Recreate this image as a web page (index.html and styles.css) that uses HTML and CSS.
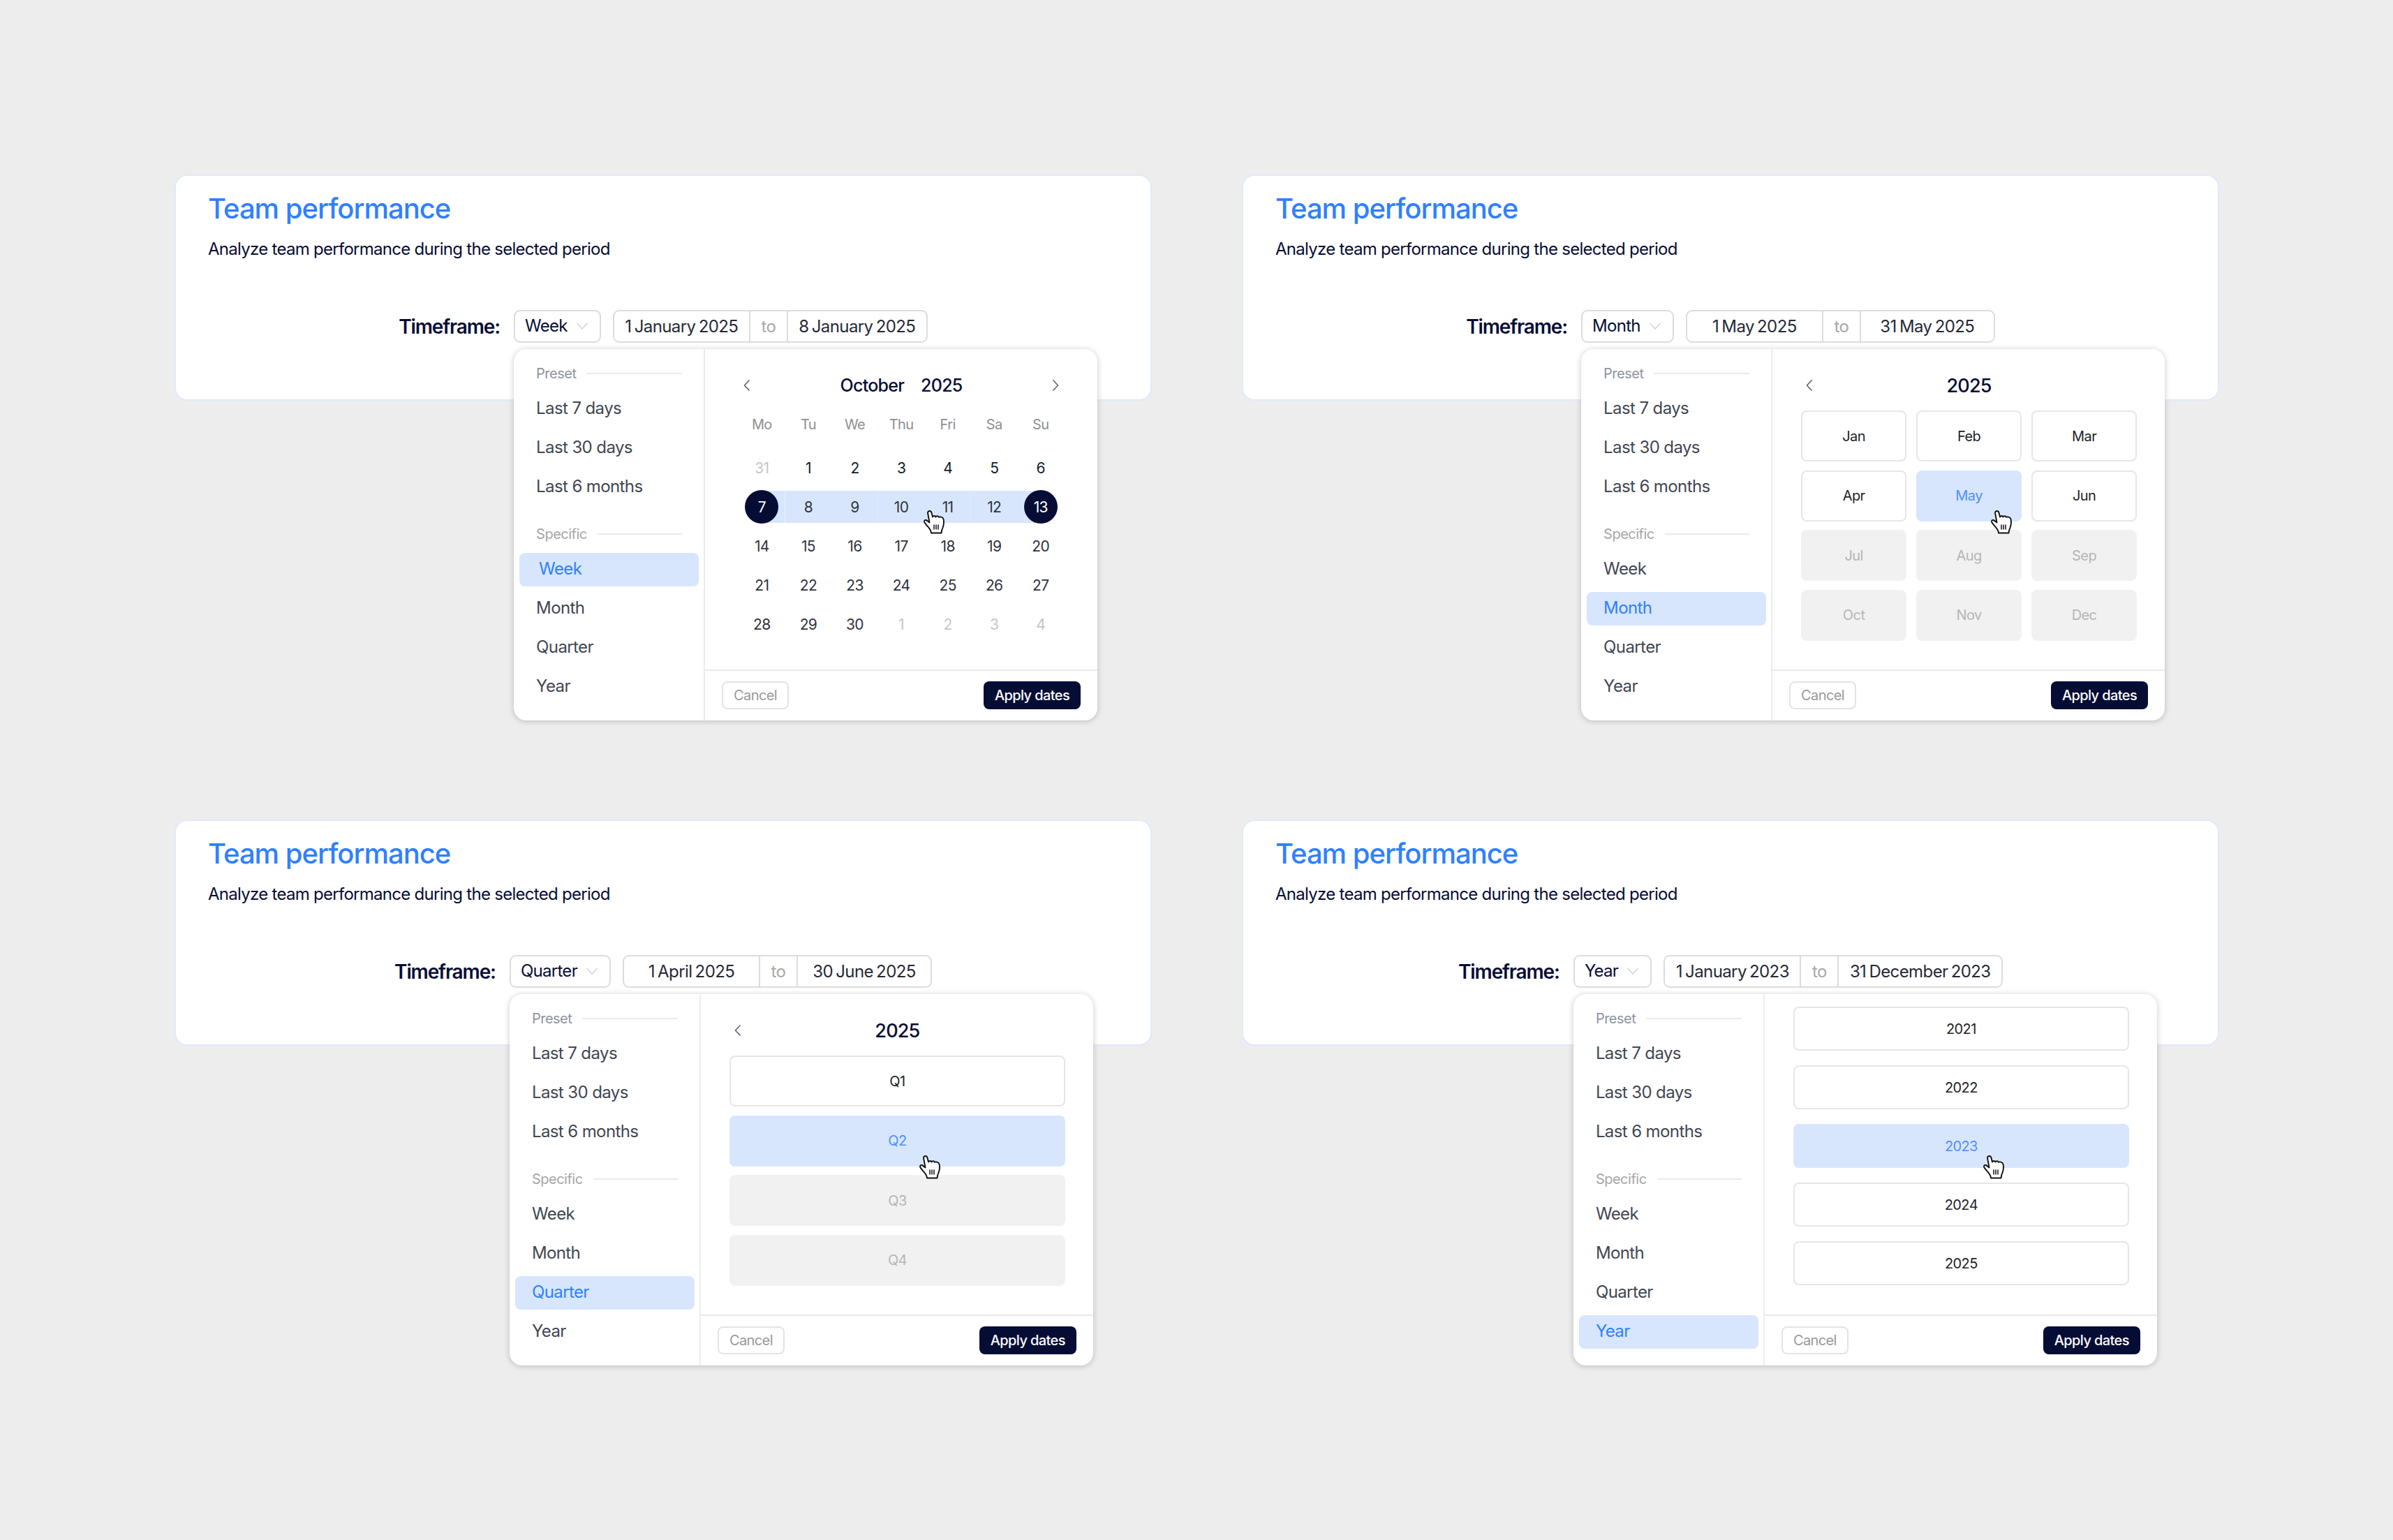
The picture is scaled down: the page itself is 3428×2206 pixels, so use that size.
FILE: index.html
```html
<!DOCTYPE html>
<html lang="en">
<head>
<meta charset="utf-8">
<title>Team performance</title>
<link rel="stylesheet" href="styles.css">
</head>
<body>
<svg class="defs" width="0" height="0" aria-hidden="true">
  <symbol id="hand" viewBox="0 0 30 33">
    <path d="M6 3C6 1 7.5.5 8.7.5c1.8 0 2.6 1.5 2.9 3L13 9c1-2 3.500-2 4.300 0 .7-1.500 3.700-1.800 4.700.3 1.500-.8 5-.3 6 1.700 1.500 2 1 8 .5 10-.5 3-2 5-2.500 8l-.5 3H11l-.5-2.500C9 25 3 20 1.500 17c-1-2 0-4 2-3.500 1.500.5 3.500 2.500 5 3.500L6 3z" fill="#fff" stroke="#111" stroke-width="1.9" stroke-linejoin="round"/>
    <path d="M15 20v7M18 20v7M21 20v7" fill="none" stroke="#111" stroke-width="1.500"/>
  </symbol>
  <symbol id="left" viewBox="0 0 12 20"><path d="M9.500 2.500 2.500 10l7 7.500" fill="none" stroke="#5d6470" stroke-width="1.600"/></symbol>
  <symbol id="right" viewBox="0 0 12 20"><path d="M2.500 2.500 9.500 10l-7 7.500" fill="none" stroke="#5d6470" stroke-width="1.600"/></symbol>
  <symbol id="down" viewBox="0 0 18 12"><path d="M1.500 2 9 10l7.500-8" fill="none" stroke="#d3d5d9" stroke-width="1.700"/></symbol>
</svg>
<main class="board">

<section class="card">
  <h2 class="title">Team performance</h2>
  <p class="subtitle">Analyze team performance during the selected period</p>
  <div class="timeframe">
    <span class="tf-label">Timeframe:</span>
    <div class="controls">
      <button class="select">Week<svg class="chev"><use href="#down"/></svg></button>
      <div class="dates"><span class="date">1 January 2025</span><span class="to">to</span><span class="date">8 January 2025</span></div>
      <div class="popup">
        <aside class="side">
          <div class="side-label">Preset</div>
          <div class="side-item">Last 7 days</div>
          <div class="side-item">Last 30 days</div>
          <div class="side-item">Last 6 months</div>
          <div class="side-label specific">Specific</div>
          <div class="side-item active indented">Week</div>
          <div class="side-item">Month</div>
          <div class="side-item">Quarter</div>
          <div class="side-item">Year</div>
        </aside>
        <div class="main">
          <div class="panel cal-panel">
            <div class="head">
              <svg class="arrow"><use href="#left"/></svg>
              <div class="head-title cal-title"><span>October</span><span>2025</span></div>
              <svg class="arrow"><use href="#right"/></svg>
            </div>
            <div class="weekdays"><span>Mo</span><span>Tu</span><span>We</span><span>Thu</span><span>Fri</span><span>Sa</span><span>Su</span></div>
            <div class="days">
              <span class="day muted">31</span><span class="day dk">1</span><span class="day dk">2</span><span class="day dk">3</span><span class="day dk">4</span><span class="day dk">5</span><span class="day dk">6</span>
              <span class="day start"><b>7</b></span><span class="day range">8</span><span class="day range">9</span><span class="day range">10</span><span class="day range">11</span><span class="day range">12</span><span class="day end"><b>13</b></span>
              <span class="day">14</span><span class="day">15</span><span class="day">16</span><span class="day">17</span><span class="day">18</span><span class="day">19</span><span class="day">20</span>
              <span class="day">21</span><span class="day">22</span><span class="day">23</span><span class="day">24</span><span class="day">25</span><span class="day">26</span><span class="day">27</span>
              <span class="day">28</span><span class="day">29</span><span class="day">30</span><span class="day muted">1</span><span class="day muted">2</span><span class="day muted">3</span><span class="day muted">4</span>
            </div>
          </div>
          <div class="foot"><button class="cancel">Cancel</button><button class="apply">Apply dates</button></div>
        </div>
        <svg class="cursor"><use href="#hand"/></svg>
      </div>
    </div>
  </div>
</section>

<section class="card">
  <h2 class="title">Team performance</h2>
  <p class="subtitle">Analyze team performance during the selected period</p>
  <div class="timeframe">
    <span class="tf-label">Timeframe:</span>
    <div class="controls">
      <button class="select">Month<svg class="chev"><use href="#down"/></svg></button>
      <div class="dates"><span class="date">1 May 2025</span><span class="to">to</span><span class="date">31 May 2025</span></div>
      <div class="popup">
        <aside class="side">
          <div class="side-label">Preset</div>
          <div class="side-item">Last 7 days</div>
          <div class="side-item">Last 30 days</div>
          <div class="side-item">Last 6 months</div>
          <div class="side-label specific">Specific</div>
          <div class="side-item">Week</div>
          <div class="side-item active">Month</div>
          <div class="side-item">Quarter</div>
          <div class="side-item">Year</div>
        </aside>
        <div class="main">
          <div class="panel">
            <div class="head">
              <svg class="arrow"><use href="#left"/></svg>
              <div class="head-title">2025</div>
              <span class="arrow"></span>
            </div>
            <div class="tiles months">
              <span class="tile">Jan</span><span class="tile">Feb</span><span class="tile">Mar</span>
              <span class="tile">Apr</span><span class="tile on">May</span><span class="tile">Jun</span>
              <span class="tile off">Jul</span><span class="tile off">Aug</span><span class="tile off">Sep</span>
              <span class="tile off">Oct</span><span class="tile off">Nov</span><span class="tile off">Dec</span>
            </div>
          </div>
          <div class="foot"><button class="cancel">Cancel</button><button class="apply">Apply dates</button></div>
        </div>
        <svg class="cursor"><use href="#hand"/></svg>
      </div>
    </div>
  </div>
</section>

<section class="card">
  <h2 class="title">Team performance</h2>
  <p class="subtitle">Analyze team performance during the selected period</p>
  <div class="timeframe">
    <span class="tf-label">Timeframe:</span>
    <div class="controls">
      <button class="select">Quarter<svg class="chev"><use href="#down"/></svg></button>
      <div class="dates"><span class="date">1 April 2025</span><span class="to">to</span><span class="date">30 June 2025</span></div>
      <div class="popup">
        <aside class="side">
          <div class="side-label">Preset</div>
          <div class="side-item">Last 7 days</div>
          <div class="side-item">Last 30 days</div>
          <div class="side-item">Last 6 months</div>
          <div class="side-label specific">Specific</div>
          <div class="side-item">Week</div>
          <div class="side-item">Month</div>
          <div class="side-item active">Quarter</div>
          <div class="side-item">Year</div>
        </aside>
        <div class="main">
          <div class="panel">
            <div class="head">
              <svg class="arrow"><use href="#left"/></svg>
              <div class="head-title">2025</div>
              <span class="arrow"></span>
            </div>
            <div class="tiles quarters">
              <span class="tile">Q1</span>
              <span class="tile on">Q2</span>
              <span class="tile off">Q3</span>
              <span class="tile off">Q4</span>
            </div>
          </div>
          <div class="foot"><button class="cancel">Cancel</button><button class="apply">Apply dates</button></div>
        </div>
        <svg class="cursor"><use href="#hand"/></svg>
      </div>
    </div>
  </div>
</section>

<section class="card">
  <h2 class="title">Team performance</h2>
  <p class="subtitle">Analyze team performance during the selected period</p>
  <div class="timeframe">
    <span class="tf-label">Timeframe:</span>
    <div class="controls">
      <button class="select">Year<svg class="chev"><use href="#down"/></svg></button>
      <div class="dates"><span class="date">1 January 2023</span><span class="to">to</span><span class="date">31 December 2023</span></div>
      <div class="popup">
        <aside class="side">
          <div class="side-label">Preset</div>
          <div class="side-item">Last 7 days</div>
          <div class="side-item">Last 30 days</div>
          <div class="side-item">Last 6 months</div>
          <div class="side-label specific">Specific</div>
          <div class="side-item">Week</div>
          <div class="side-item">Month</div>
          <div class="side-item">Quarter</div>
          <div class="side-item active">Year</div>
        </aside>
        <div class="main">
          <div class="panel">
            <div class="tiles years">
              <span class="tile">2021</span>
              <span class="tile">2022</span>
              <span class="tile on">2023</span>
              <span class="tile">2024</span>
              <span class="tile">2025</span>
            </div>
          </div>
          <div class="foot"><button class="cancel">Cancel</button><button class="apply">Apply dates</button></div>
        </div>
        <svg class="cursor"><use href="#hand"/></svg>
      </div>
    </div>
  </div>
</section>

</main>
</body>
</html>
```

FILE: styles.css
```css
* { box-sizing: border-box; }
html, body { margin: 0; background: #ededed; }
body { min-height: 2206px; font-family: Inter, "Liberation Sans", sans-serif; color: #060d35; }
.defs { position: absolute; }

.board {
  display: grid;
  grid-template-columns: 1400px 1400px;
  grid-auto-rows: 324px;
  column-gap: 129px;
  row-gap: 600px;
  padding: 250px 0 0 250px;
}
.card {
  background: #fff;
  border: 2px solid #e0eafb;
  border-radius: 18px;
  padding: 24px 46px 0;
}
.title {
  margin: 0;
  font-size: 40px;
  line-height: 46px;
  font-weight: 500;
  letter-spacing: -0.025em;
  color: #2f80ff;
}
.subtitle {
  margin: 20px 0 0;
  font-size: 24px;
  line-height: 30px;
  letter-spacing: -0.03em;
  color: #060d35;
}
.timeframe {
  display: flex;
  justify-content: center;
  align-items: center;
  gap: 20px;
  margin-top: 72px;
}
.tf-label { font-size: 28px; font-weight: 600; letter-spacing: -0.04em; }
.controls { position: relative; display: flex; gap: 17px; }

.select {
  display: flex;
  align-items: center;
  gap: 12px;
  height: 47px;
  padding: 0 16px 2px 14px;
  background: #fff;
  border: 2px solid #dcdcdc;
  border-radius: 9px;
  font: 400 24px Inter, sans-serif;
  letter-spacing: -0.03em;
  color: #060d35;
}
.chev { width: 18px; height: 12px; }
.dates {
  display: flex;
  height: 47px;
  border: 2px solid #dcdcdc;
  border-radius: 9px;
  font-size: 24px;
  letter-spacing: -0.025em;
  word-spacing: -0.08em;
  color: #262a36;
}
.date { display: flex; align-items: center; justify-content: center; min-width: 190px; padding: 0 15.5px; }
.date:first-child { min-width: 193px; }
.to {
  display: flex;
  align-items: center;
  justify-content: center;
  width: 56px;
  border-left: 2px solid #dcdcdc;
  border-right: 2px solid #dcdcdc;
  color: #a8a8a8;
}

.popup {
  position: absolute;
  top: 56px;
  left: 0;
  display: flex;
  width: 836px;
  height: 532px;
  background: #fff;
  border-radius: 18px;
  box-shadow: 0 1px 8px rgba(0, 0, 0, 0.22);
  z-index: 2;
}
.cursor { position: absolute; left: 587px; top: 231px; width: 30px; height: 34px; }

.side {
  flex: none;
  width: 274px;
  padding: 23px 7px 0 8px;
  border-right: 2px solid #ececec;
}
.side-label {
  display: flex;
  align-items: center;
  gap: 15px;
  height: 24px;
  margin: 0 24px 15px;
  font-size: 20px;
  letter-spacing: -0.025em;
  color: #8d949e;
}
.side-label::after { content: ""; flex: 1; height: 2px; background: #e9e9e9; }
.side-label.specific { margin-top: 31px; color: #a6a6a6; }
.side-item {
  display: flex;
  align-items: center;
  height: 48px;
  margin-bottom: 8px;
  padding: 0 0 3px 24px;
  border-radius: 8px;
  font-size: 24px;
  letter-spacing: -0.025em;
  color: #414752;
}
.side-item.active { background: #d7e6fd; color: #2f80ff; }
.side-item.indented { padding-left: 28px; }

.main { flex: 1; min-width: 0; display: flex; flex-direction: column; }
.panel { flex: 1; padding: 0 40px 0 41px; }
.cal-panel { padding: 0 48px; }
.foot {
  flex: none;
  display: flex;
  align-items: center;
  justify-content: space-between;
  height: 73px;
  padding: 0 24px 2px;
  border-top: 2px solid #e9e9e9;
}
.cancel, .apply {
  height: 40px;
  padding: 0 15px;
  border-radius: 8px;
  font: 400 20px Inter, sans-serif;
  letter-spacing: -0.03em;
}
.cancel { background: #fff; border: 2px solid #e3e3e3; color: #999; }
.apply { padding: 0 16px; background: #060d35; border: 0; color: #fff; font-weight: 500; }

.head {
  display: flex;
  align-items: center;
  justify-content: space-between;
  height: 32px;
  margin-top: 36px;
}
.arrow { flex: none; width: 12px; height: 20px; margin-left: 6px; margin-right: 6px; }
.head-title { font-size: 27px; font-weight: 500; letter-spacing: -0.03em; }
.cal-title { display: flex; gap: 24px; font-size: 25px; }

.weekdays {
  display: grid;
  grid-template-columns: repeat(7, 1fr);
  height: 48px;
  margin-top: 16px;
  align-items: center;
  text-align: center;
  font-size: 20px;
  letter-spacing: -0.03em;
  color: #8d8f94;
}
.days { display: grid; grid-template-columns: repeat(7, 1fr); grid-auto-rows: 48px; row-gap: 8px; margin-top: 14px; }
.day {
  display: flex;
  align-items: center;
  justify-content: center;
  font-size: 21px;
  letter-spacing: -0.03em;
  color: #30343f;
}
.day.dk { color: #0f1c2a; }
.day.muted { color: #c6c6c6; }
.day.range { background: linear-gradient(#d7e6fd, #d7e6fd) center / 100% 46px no-repeat; }
.day.start { background: linear-gradient(#d7e6fd, #d7e6fd) right center / 50% 46px no-repeat; }
.day.end { background: linear-gradient(#d7e6fd, #d7e6fd) left center / 50% 46px no-repeat; }
.day b {
  display: flex;
  align-items: center;
  justify-content: center;
  width: 48px;
  height: 48px;
  border-radius: 50%;
  background: #060d35;
  color: #fff;
  font-weight: 400;
}

.tiles { display: grid; }
.months { grid-template-columns: repeat(3, 1fr); grid-auto-rows: 73px; column-gap: 14px; row-gap: 12.5px; margin-top: 20px; }
.quarters { grid-auto-rows: 73px; row-gap: 12.5px; margin-top: 20px; }
.years { grid-auto-rows: 63px; row-gap: 21px; padding-top: 18px; }
.tile {
  display: flex;
  align-items: center;
  justify-content: center;
  border: 2px solid #e6e6e6;
  border-radius: 8px;
  font-size: 20px;
  letter-spacing: -0.03em;
  color: #1c1f28;
}
.tile.on { background: #d7e6fd; border-color: #d7e6fd; color: #4f8fff; }
.tile.off { background: #f1f1f1; border-color: #f1f1f1; color: #b5b5b5; }
```
